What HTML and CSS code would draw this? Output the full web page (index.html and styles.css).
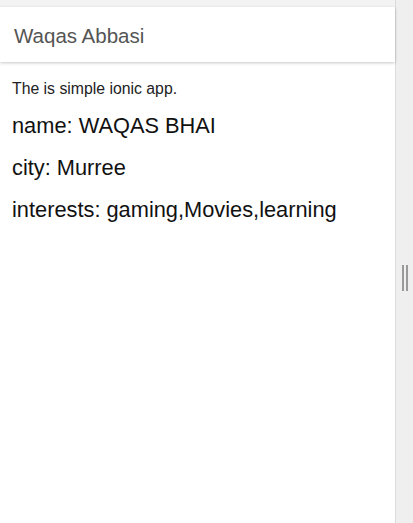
FILE: index.html
```html
<!DOCTYPE html>
<html>
<head>
<meta charset="utf-8">
<link rel="stylesheet" href="styles.css">
</head>
<body>
<div class="app">
  <div class="main">
    <header class="toolbar"><div class="title">Waqas Abbasi</div></header>
    <main class="content">
      <p class="intro">The is simple ionic app.</p>
      <p class="item">name: WAQAS BHAI</p>
      <p class="item">city: Murree</p>
      <p class="item">interests: gaming,Movies,learning</p>
    </main>
  </div>
  <aside class="side">
    <div class="handle"><span></span><span></span></div>
  </aside>
</div>
</body>
</html>
```
FILE: styles.css
```css
html, body { margin: 0; padding: 0; height: 100%; }
body {
  background: #f3f3f3;
  font-family: "Liberation Sans", Arial, sans-serif;
  overflow: hidden;
}
.app { display: flex; height: 100%; }
.main {
  width: 395px;
  padding-top: 7px;
  display: flex;
  flex-direction: column;
}
.toolbar {
  background: #fff;
  height: 55px;
  display: flex;
  align-items: center;
  padding-left: 14px;
  box-shadow: 0 1px 3px rgba(0,0,0,0.22);
  position: relative;
  z-index: 1;
}
.title { font-size: 20.5px; color: #555; margin-top: 2px; }
.content {
  flex: 1;
  background: #fff;
  padding: 17px 12px 0;
}
.intro { margin: 0 0 14px; font-size: 15.8px; color: #222; line-height: 20px; }
.item { margin: 0 0 16px; font-size: 21.8px; color: #111; line-height: 26px; }
.side {
  flex: 1;
  background: #efefef;
  border-left: 1px solid #dcdcdc;
  display: flex;
  align-items: center;
  justify-content: center;
}
.handle { display: flex; gap: 2px; margin-top: 32px; }
.handle span { width: 2px; height: 26px; background: #9a9a9a; }
```
